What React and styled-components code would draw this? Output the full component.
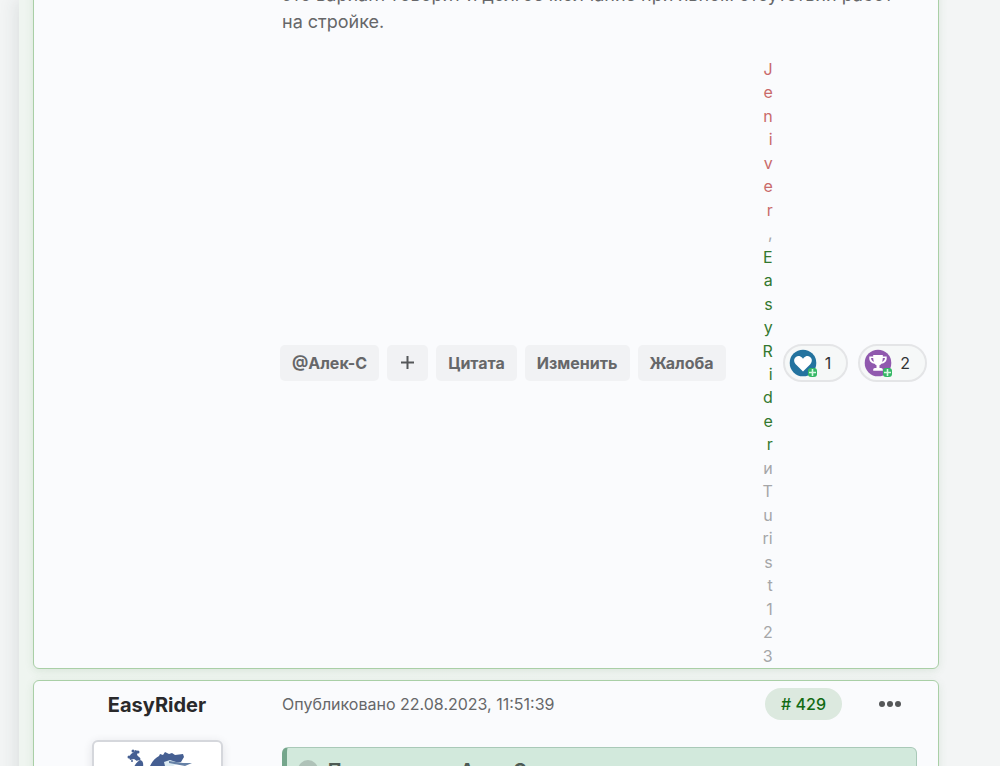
import React from "react";
import styled, { createGlobalStyle } from "styled-components";

const Global = createGlobalStyle`
  *, *::before, *::after { box-sizing: border-box; }
  html, body { margin: 0; height: 100%; overflow: hidden; }
  body {
    background: #f3f5f5;
    color: #666769;
    font-family: Inter, "Liberation Sans", sans-serif;
  }
  #root { height: 100%; }
  button { font: inherit; color: inherit; border: 0; cursor: pointer; }
  a { color: inherit; text-decoration: none; }
`;

const Page = styled.div`
  height: 100%;
  padding-left: 19px;
  overflow: hidden;
`;

const Thread = styled.main`
  display: flex;
  flex-direction: column;
  gap: 11px;
  min-height: 100%;
  padding: 0 61px 0 14px;
  background: linear-gradient(90deg, #eff5f0, #f3f5f5 95%);
  box-shadow: -4px 0 16px rgba(40, 60, 60, 0.1);
`;

const Post = styled.article`
  display: grid;
  grid-template-columns: 246px minmax(0, 1fr);
  border: 1px solid #a9cfa6;
  border-radius: 6px;
  background: #fafbfd;
  box-shadow: 0 2px 8px rgba(70, 130, 70, 0.13);
  flex-shrink: 0;
`;

const FirstPost = styled(Post)`
  margin-top: -20px;
`;

const Author = styled.aside`
  display: flex;
  flex-direction: column;
  align-items: center;
  gap: 20px;
  padding-top: 9px;
`;

const AuthorName = styled.h2`
  margin: 0;
  font-size: 20px;
  line-height: 30px;
  font-weight: 700;
  color: #29292b;
`;

const Avatar = styled.div`
  width: 131px;
  height: 131px;
  border: 2px solid #d5d7dc;
  border-radius: 6px;
  background: #fff;
  box-shadow: 0 2px 10px rgba(40, 40, 60, 0.12);
  svg { display: block; width: 100%; }
`;

const Body = styled.div`
  min-width: 0;
`;

const Text = styled.p`
  margin: 0;
  padding: 0 20px 0 2px;
  font-size: 18px;
  line-height: 27px;
`;

const Footer = styled.footer`
  display: flex;
  align-items: center;
  justify-content: space-between;
  margin-top: 23px;
  padding-right: 11px;
`;

const Group = styled.div`
  display: flex;
  align-items: center;
  gap: ${(p) => p.$gap}px;
`;

const Action = styled.button`
  height: 36px;
  padding: 0 12px;
  border-radius: 5px;
  background: #f1f2f4;
  font-size: 16px;
  font-weight: 700;
  svg { display: block; }
`;

const Reactors = styled.div`
  display: grid;
  grid-auto-rows: 1fr;
  height: 610px;
  font-size: 16px;
  line-height: 23px;
  text-align: right;
  color: #a5a6a8;
`;

const Name = styled.a`
  display: grid;
  grid-row: span ${(p) => p.$rows};
  grid-auto-rows: 1fr;
  color: ${(p) => p.$color};
`;

const Reaction = styled.button`
  display: flex;
  align-items: center;
  gap: 8px;
  height: 38px;
  padding: 0 15px 0 4px;
  border: 2px solid #e4e5e7;
  border-radius: 19px;
  background: #f6f8f8;
  color: #303234;
  font-size: 16px;
`;

const Head = styled.header`
  display: flex;
  align-items: center;
  height: 32px;
  margin-top: 7px;
  padding: 0 36px 0 2px;
`;

const Posted = styled.time`
  flex: 1;
  font-size: 16px;
  line-height: 24px;
`;

const Number = styled.a`
  padding: 0 16px;
  border-radius: 16px;
  background: #dce9df;
  color: #126b14;
  font-size: 16px;
  line-height: 32px;
  font-weight: 500;
`;

const More = styled.button`
  margin-left: 36px;
  padding: 0;
  background: none;
  svg { display: block; }
`;

const Quote = styled.blockquote`
  display: flex;
  align-items: center;
  gap: 10px;
  margin: 27px 21px 0 2px;
  padding: 8px 11px;
  border: 1px solid #a9c9b8;
  border-left: 5px solid #75a68c;
  border-radius: 6px;
  background: #d2e9dc;
  color: #4d5a53;
  font-size: 18px;
  line-height: 28px;
  font-weight: 700;
`;

const QuoteMark = styled.span`
  width: 20px;
  height: 20px;
  border-radius: 50%;
  background: #afc2b8;
`;

function Letters({ parts, color }) {
  return (
    <Name href="#" $color={color} $rows={parts.length}>
      {parts.map((part, i) => <span key={i}>{part}</span>)}
    </Name>
  );
}

function PlusBadge() {
  return (
    <>
      <rect x="19" y="19" width="9" height="9" rx="3" fill="#35b765" />
      <path d="M23.5 20v7M20 23.5h7" stroke="#d8f7e2" strokeWidth="1.6" />
    </>
  );
}

function HeartIcon() {
  return (
    <svg width="28" height="28" viewBox="0 0 28 28" aria-hidden="true">
      <circle cx="14" cy="14" r="13.3" fill="#24739f" />
      <path d="M14 22.6l-7.300-7.400c-2.200-2.300-2-5.600.2-7.200 2-1.500 4.400-1.100 6.100.6l1 1.100 1-1.100c1.700-1.700 4.100-2.100 6.100-.6 2.200 1.600 2.400 4.900.2 7.200z" fill="#fff" />
      <PlusBadge />
    </svg>
  );
}

function TrophyIcon() {
  return (
    <svg width="28" height="28" viewBox="0 0 28 28" aria-hidden="true">
      <circle cx="14" cy="14" r="13.3" fill="#9059ae" />
      <path d="M9.200 6h9.600v1.500h3.900v1.900c0 3-2.500 4.900-5.300 5.300-.6.800-1.200 1.300-1.900 1.600v2.700h1.500c1.100 0 1.800.8 1.800 1.800v.9H9.200v-.9c0-1 .7-1.800 1.800-1.800h1.500v-2.700c-.7-.3-1.300-.8-1.900-1.600-2.800-.4-5.300-2.300-5.300-5.300V7.500h3.900z" fill="#fff" />
      <path d="M9.200 9H7c.1 1.900 1.200 3.200 3 3.700-.5-1.100-.8-2.400-.8-3.700zM18.800 9H21c-.1 1.900-1.200 3.200-3 3.700.5-1.100.8-2.400.8-3.700z" fill="#9059ae" />
      <PlusBadge />
    </svg>
  );
}

function Griffin() {
  return (
    <svg viewBox="0 0 127 127" role="img" aria-label="EasyRider">
      <g fill="#455f92">
        <path d="M37 12l3-2 1-2 3 1-1 4 3 3-3 3-3-2-4 1-1-3z" />
        <circle cx="39" cy="9" r="1.500" /><circle cx="44" cy="10" r="1.500" />
        <circle cx="35" cy="15" r="1.500" /><circle cx="38" cy="19" r="1" />
        <circle cx="45" cy="17" r="1.500" />
        <path d="M38 36c0-9 3-15 8-18 5 1 4 9-2 18z" />
        <path d="M54 38c-1-12 4-20 11-24l1-2 3 1 2-3 4 2 3-1 3 2 8-1 1 3-3 5-6 1-5 3 2 4 5 4-3 6z" />
      </g>
      <path d="M70 20l6-2 9 3-8 4-6-1z" fill="#dcebf2" />
      <path d="M75 19l14 2 9 0-7 3-16-3z" fill="#6681a6" />
    </svg>
  );
}

export default function App() {
  return (
    <Page>
      <Global />
      <Thread>
        <FirstPost>
          <Author />
          <Body>
            <Text>
              это вариант говорит и долгое молчание при явном отсутствии работ
              <br />
              на стройке.
            </Text>
            <Footer>
              <Group $gap={8}>
                <Action>@Алек-С</Action>
                <Action aria-label="Добавить">
                  <svg width="17" height="16" viewBox="0 0 17 16">
                    <path d="M8.500 1v13M2 7.500h13" stroke="#555759" strokeWidth="2" />
                  </svg>
                </Action>
                <Action>Цитата</Action>
                <Action>Изменить</Action>
                <Action>Жалоба</Action>
              </Group>
              <Group $gap={10}>
                <Reactors>
                  <Letters color="#c96a6a" parts={[..."Jeniver"]} />
                  <span>,</span>
                  <Letters color="#33782f" parts={[..."EasyRider"]} />
                  <span>и</span>
                  <Letters parts={["T", "u", "ri", ..."st123"]} />
                </Reactors>
                <Reaction><HeartIcon />1</Reaction>
                <Reaction><TrophyIcon />2</Reaction>
              </Group>
            </Footer>
          </Body>
        </FirstPost>
        <Post>
          <Author>
            <AuthorName>EasyRider</AuthorName>
            <Avatar><Griffin /></Avatar>
          </Author>
          <Body>
            <Head>
              <Posted>Опубликовано 22.08.2023, 11:51:39</Posted>
              <Number href="#"># 429</Number>
              <More aria-label="Ещё">
                <svg width="24" height="8" viewBox="0 0 24 8" fill="#555759">
                  <circle cx="4" cy="4" r="3" /><circle cx="12" cy="4" r="3" /><circle cx="20" cy="4" r="3" />
                </svg>
              </More>
            </Head>
            <Quote>
              <QuoteMark />
              <span>Пользователь Алек-С сказал:</span>
            </Quote>
          </Body>
        </Post>
      </Thread>
    </Page>
  );
}
